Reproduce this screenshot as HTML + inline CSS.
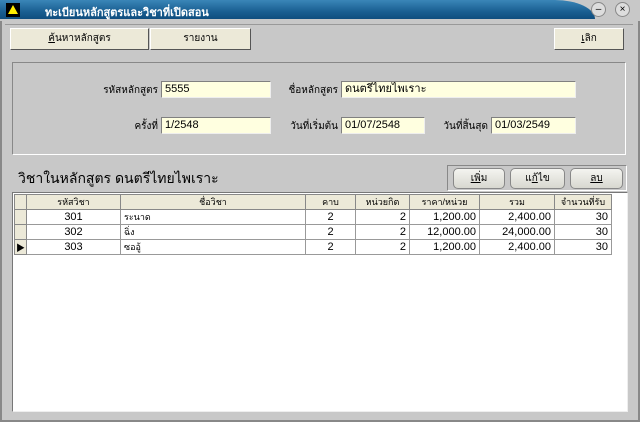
<!DOCTYPE html><html><head><meta charset="utf-8"><style>
*{box-sizing:border-box;margin:0;padding:0}
body{width:640px;height:422px;overflow:hidden;background:#c8c8c8;font-family:"Liberation Sans","Noto Sans CJK SC",sans-serif;font-size:11px;position:relative;color:#000}
.a{position:absolute}
.title{left:0;top:0;width:640px;height:21px;background:#c8c8c8}
.blue{left:0;top:0;width:595px;height:19px;background:linear-gradient(#3a86b8,#1a5f92 60%,#0f4d7e);border-top-right-radius:40px 19px}
.btn{background:#ece9d8;border:1px solid #fff;border-right-color:#555;border-bottom-color:#555;text-align:center;line-height:20px;font-size:10px}
.in{background:#ffffe0;border:1px solid #808080;border-right-color:#eee;border-bottom-color:#eee;height:17px;line-height:15px;padding-left:3px;font-size:11px}
.lbl{font-size:10px;text-align:right}
table{border-collapse:collapse;font-size:11px}
td{border:1px solid #999;height:15px;padding:0 3px}
th{background:#ece9d8;border:1px solid #888;height:15px;font-weight:normal;font-size:9px}
.r{text-align:right}.c{text-align:center}
.rb{background:linear-gradient(#f4f4f0,#d8d8d0);border:1px solid #888;border-radius:5px;text-align:center;line-height:19px;font-size:10px}
</style></head><body>
<div class="a" style="left:0;top:0;width:640px;height:422px;border:2px solid #888;border-top:none"></div>
<div class="a title"></div>
<div class="a blue"></div>
<div class="a" style="left:6px;top:3px;width:14px;height:14px;background:#000"></div>
<div class="a" style="left:8px;top:5px;width:0;height:0;border-left:5px solid transparent;border-right:5px solid transparent;border-bottom:9px solid #ffee00"></div>
<div class="a" style="left:45px;top:3px;color:#fff;font-weight:bold;font-size:11px">ทะเบียนหลักสูตรและวิชาที่เปิดสอน</div>
<div class="a" style="left:591px;top:2px;width:15px;height:15px;border-radius:50%;background:#ddd;border:1px solid #888;text-align:center;font-size:10px;line-height:13px">–</div>
<div class="a" style="left:615px;top:2px;width:15px;height:15px;border-radius:50%;background:#ddd;border:1px solid #888;text-align:center;font-size:10px;line-height:13px">×</div>
<div class="a" style="left:5px;top:24px;width:628px;height:1px;background:#999"></div>
<div class="a btn" style="left:10px;top:28px;width:139px;height:22px"><u>ค้</u>นหาหลักสูตร</div>
<div class="a btn" style="left:150px;top:28px;width:101px;height:22px">รายงาน</div>
<div class="a btn" style="left:554px;top:28px;width:70px;height:22px"><u>เ</u>ลิก</div>
<div class="a" style="left:12px;top:62px;width:614px;height:93px;border:1px solid #888;border-right-color:#fff;border-bottom-color:#fff"></div>
<div class="a lbl" style="left:90px;top:83px;width:68px">รหัสหลักสูตร</div>
<div class="a in" style="left:161px;top:81px;width:110px">5555</div>
<div class="a lbl" style="left:280px;top:83px;width:58px">ชื่อหลักสูตร</div>
<div class="a in" style="left:341px;top:81px;width:235px">ดนตรีไทยไพเราะ</div>
<div class="a lbl" style="left:100px;top:119px;width:58px">ครั้งที่</div>
<div class="a in" style="left:161px;top:117px;width:110px">1/2548</div>
<div class="a lbl" style="left:280px;top:119px;width:58px">วันที่เริ่มต้น</div>
<div class="a in" style="left:341px;top:117px;width:84px">01/07/2548</div>
<div class="a lbl" style="left:430px;top:119px;width:58px">วันที่สิ้นสุด</div>
<div class="a in" style="left:491px;top:117px;width:85px">01/03/2549</div>
<div class="a" style="left:18px;top:168px;font-size:14px">วิชาในหลักสูตร ดนตรีไทยไพเราะ</div>
<div class="a" style="left:447px;top:165px;width:180px;height:26px;border:1px solid #888;border-right-color:#fff;border-bottom-color:#fff"></div>
<div class="a rb" style="left:453px;top:168px;width:52px;height:21px"><u>เพิ่</u>ม</div>
<div class="a rb" style="left:510px;top:168px;width:55px;height:21px">แ<u>ก้</u>ไข</div>
<div class="a rb" style="left:570px;top:168px;width:53px;height:21px"><u>ลบ</u></div>
<div class="a" style="left:12px;top:192px;width:616px;height:220px;background:#fff;border:1px solid #777;border-right-color:#eee;border-bottom-color:#eee"></div>
<table class="a" style="left:14px;top:194px;width:597px;table-layout:fixed">
<colgroup><col style="width:12px"><col style="width:94px"><col style="width:185px"><col style="width:50px"><col style="width:54px"><col style="width:70px"><col style="width:75px"><col style="width:57px"></colgroup>
<tr><th></th><th>รหัสวิชา</th><th>ชื่อวิชา</th><th>คาบ</th><th>หน่วยกิต</th><th>ราคา/หน่วย</th><th>รวม</th><th>จำนวนที่รับ</th></tr>
<tr><th></th><td class="c">301</td><td style="font-size:9px">ระนาด</td><td class="c">2</td><td class="r">2</td><td class="r">1,200.00</td><td class="r">2,400.00</td><td class="r">30</td></tr>
<tr><th></th><td class="c">302</td><td style="font-size:9px">ฉิ่ง</td><td class="c">2</td><td class="r">2</td><td class="r">12,000.00</td><td class="r">24,000.00</td><td class="r">30</td></tr>
<tr><th style="font-size:9px">▶</th><td class="c">303</td><td style="font-size:9px">ซออู้</td><td class="c">2</td><td class="r">2</td><td class="r">1,200.00</td><td class="r">2,400.00</td><td class="r">30</td></tr>
</table>
</body></html>
